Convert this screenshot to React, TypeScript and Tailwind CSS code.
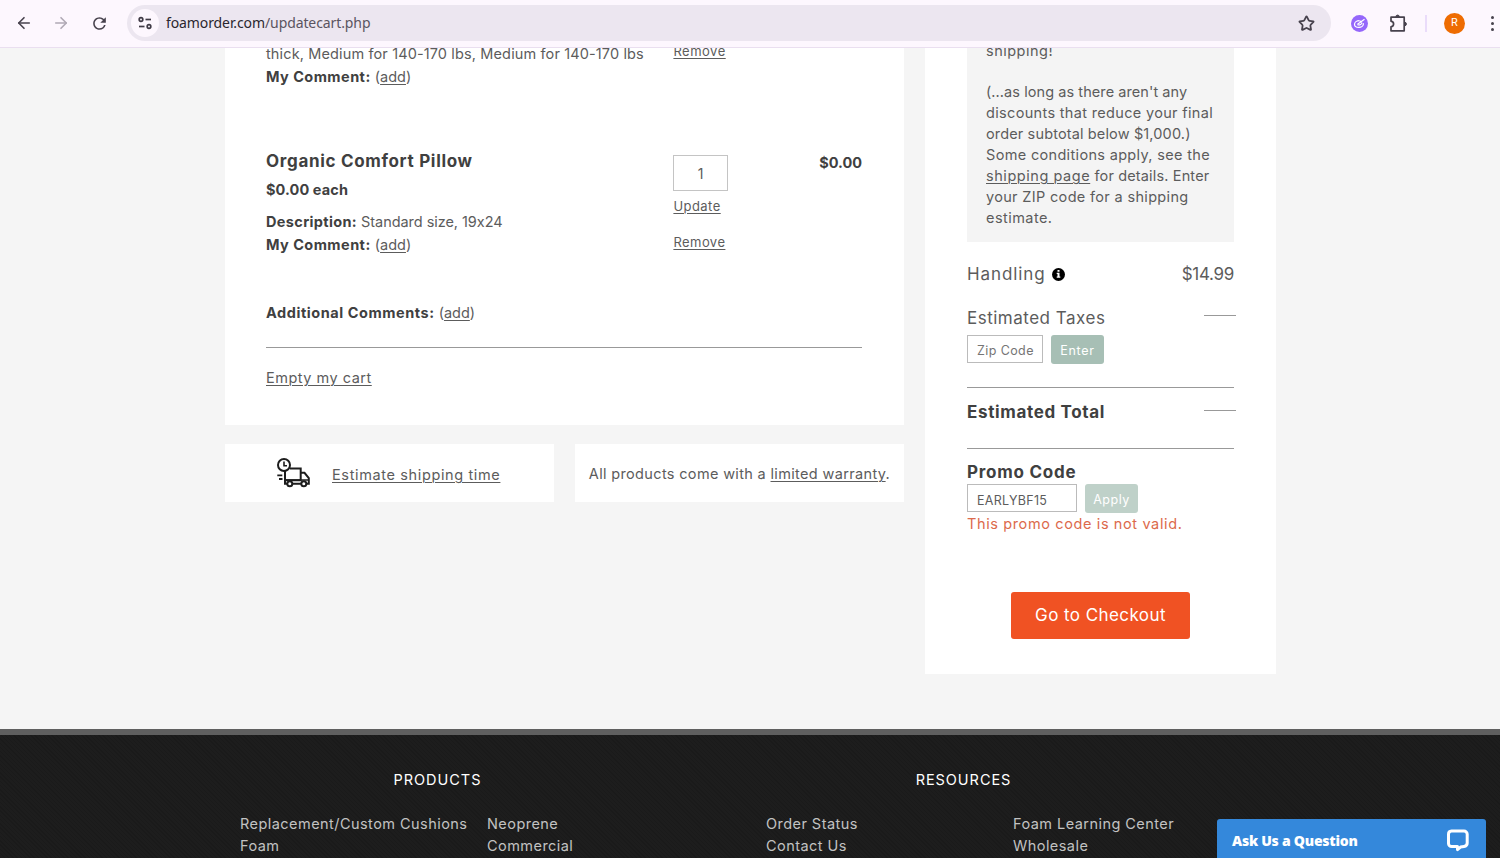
import type { ReactNode } from "react";
import { ArrowLeft, ArrowRight, Star } from "lucide-react";
import { MdRefresh } from "react-icons/md";

const FOOTER_GROUPS = [
  {
    title: "PRODUCTS",
    className: "ml-[240px]",
    links: ["Replacement/Custom Cushions", "Neoprene", "Foam", "Commercial"],
  },
  {
    title: "RESOURCES",
    className: "ml-[131px]",
    links: ["Order Status", "Foam Learning Center", "Contact Us", "Wholesale"],
  },
];

function A({ children, className = "" }: { children: ReactNode; className?: string }) {
  return (
    <a href="#" className={`underline decoration-1 underline-offset-2 ${className}`}>
      {children}
    </a>
  );
}

function Label({ children, className = "tracking-[0.45px]" }: { children: ReactNode; className?: string }) {
  return <b className={`font-bold text-[#404040] ${className}`}>{children}</b>;
}

function SiteSettingsIcon() {
  return (
    <svg width="16" height="16" viewBox="0 0 16 16" fill="none" stroke="#3f3a45" strokeWidth="1.7">
      <circle cx="4" cy="4.5" r="1.8" />
      <path d="M8.5 4.5H14" />
      <circle cx="12" cy="11.5" r="1.8" />
      <path d="M2 11.5H7.5" />
    </svg>
  );
}

function PuzzleIcon() {
  return (
    <svg width="20" height="20" viewBox="0 0 20 20" fill="none" stroke="#47424d" strokeWidth="1.7" strokeLinejoin="round">
      <path d="M3 4.2h13.2v13.6H3V13.8c1.7-.3 2.6-1.4 2.6-2.8S4.7 8.5 3 8.2z" />
      <path d="M7.9 3.8a1.7 1.7 0 0 1 3.4 0z" fill="#47424d" strokeWidth="1" />
      <path d="M16.7 9.3a1.7 1.7 0 0 1 0 3.4z" fill="#47424d" strokeWidth="1" />
    </svg>
  );
}

function TruckIcon() {
  return (
    <svg width="36" height="32" viewBox="0 0 36 32" fill="none" stroke="#1d1d1d" strokeWidth="2">
      <circle cx="8" cy="8" r="6" />
      <path d="M8 4.5v4.3h3" strokeWidth="1.6" />
      <path d="M14 11.5h10.7v11.7H9V14" />
      <path d="M24.7 15.8h3.8l4.3 5.2v5.700h-1.800M9 22v4.700h2M16.500 26.700h8.500" />
      <path d="M9 23h24" strokeWidth="1.5" />
      <circle cx="13.8" cy="26.7" r="2.5" fill="#fff" />
      <circle cx="27.8" cy="26.7" r="2.5" fill="#fff" />
      <path d="M1.300 18.300h5M3 22h3.500" strokeWidth="1.8" />
    </svg>
  );
}

function ChatIcon() {
  return (
    <svg width="24" height="25" viewBox="0 0 24 25" fill="none" stroke="#fff" strokeWidth="3" strokeLinejoin="round">
      <path d="M5.5 3h12.500a3.200 3.200 0 0 1 3.200 3.200v8.800c0 2-1.400 3.200-3.200 3.500l-3.500.6-3 2.500v-3H5.700a3.200 3.200 0 0 1-3.200-3.200V6.200A3.200 3.200 0 0 1 5.500 3z" />
    </svg>
  );
}

function BrowserBar() {
  return (
    <header className="flex h-12 shrink-0 items-center border-b border-[#eadff0] bg-[#fdf7fe] pb-px">
      <ArrowLeft className="ml-[15px] h-[18px] w-[18px] text-[#47424d]" strokeWidth={2.2} />
      <ArrowRight className="ml-[19px] h-[18px] w-[18px] text-[#b0a9b5]" strokeWidth={2.2} />
      <MdRefresh className="ml-5 h-[19px] w-[19px] text-[#47424d]" />
      <div className="ml-[18px] flex h-9 w-[1204px] items-center rounded-full bg-[#ece6f0]">
        <span className="ml-1 flex h-7 w-7 items-center justify-center rounded-full bg-[#fdf7fe]">
          <SiteSettingsIcon />
        </span>
        <span className="ml-[7px] font-['Noto_Sans',sans-serif] text-[14px] leading-5 tracking-[-0.1px] text-[#5a5460]">
          <span className="text-[#2a262e]">foamorder.com</span>/updatecart.php
        </span>
        <Star className="mr-4 ml-auto h-[17px] w-[17px] text-[#47424d]" strokeWidth={2.5} strokeLinejoin="miter" />
      </div>
      <span className="ml-5 flex h-[17px] w-[17px] items-center justify-center rounded-full bg-[#9567fb]">
        <svg width="13" height="11" viewBox="0 0 13 11" fill="none" stroke="#fff" strokeWidth="1.2">
          <path d="M10.5 5.2c0 2.4-2.1 4.2-4.6 4.2C3.4 9.4 1.5 8 1.5 6.2c0-2 2.3-3.6 5-3.6" />
          <path d="M4.5 6.3l7-5M4.5 6.3c1 1.4 3.5.6 4.8-1.5M6.7 2.7l2 2.2" />
        </svg>
      </span>
      <span className="ml-5">
        <PuzzleIcon />
      </span>
      <span className="ml-[17px] h-[17px] w-0.5 bg-[#eadcfa]" />
      <span className="ml-[17px] flex h-[21px] w-[21px] items-center justify-center rounded-full bg-[#ee6c02] font-[Roboto,sans-serif] text-[11px] text-white">
        R
      </span>
      <span className="ml-[26px] flex flex-col gap-[3px]">
        <i className="h-[3px] w-[3px] rounded-full bg-[#47424d]" />
        <i className="h-[3px] w-[3px] rounded-full bg-[#47424d]" />
        <i className="h-[3px] w-[3px] rounded-full bg-[#47424d]" />
      </span>
    </header>
  );
}

function CartCard() {
  return (
    <section className="h-[377px] overflow-hidden bg-white pr-[42px] pl-[41px]">
      <div className="-mt-1.5 flex h-[107px]">
        <div className="w-[407.4px] leading-[23px]">
          <p className="tracking-[0.13px] whitespace-nowrap">thick, Medium for 140-170 lbs, Medium for 140-170 lbs</p>
          <p>
            <Label>My Comment:</Label> (<A>add</A>)
          </p>
        </div>
        <A className="text-[13px] leading-[19px] tracking-[0.5px]">Remove</A>
      </div>
      <div className="flex h-[152px]">
        <div className="w-[407.4px]">
          <h2 className="text-[17px] leading-6 font-bold tracking-[0.68px] text-[#404040]">Organic Comfort Pillow</h2>
          <p className="mt-[5px] leading-6">
            <Label className="tracking-[0.1px]">$0.00 each</Label>
          </p>
          <p className="mt-2 leading-[23px]">
            <Label className="tracking-[0.35px]">Description:</Label>
            <span className="tracking-[-0.05px]"> Standard size, 19x24</span>
          </p>
          <p className="leading-[23px]">
            <Label>My Comment:</Label> (<A>add</A>)
          </p>
        </div>
        <div className="flex flex-col items-start text-[13px] leading-5 tracking-[0.45px]">
          <input
            defaultValue="1"
            className="mt-1.5 h-9 w-[55px] border border-[#c4c4c4] bg-white text-center text-[14px]"
          />
          <A className="mt-[5px]">Update</A>
          <A className="mt-4">Remove</A>
        </div>
        <p className="mt-0.5 ml-auto leading-6 font-bold text-[#404040]">$0.00</p>
      </div>
      <p className="leading-6">
        <Label className="tracking-[0.55px]">Additional Comments:</Label> (<A>add</A>)
      </p>
      <hr className="mt-[22px] border-[#999]" />
      <p className="mt-[18px] leading-[23px] tracking-[0.5px]">
        <A>Empty my cart</A>
      </p>
    </section>
  );
}

function SummaryCard() {
  return (
    <aside className="h-[626px] w-[351px] overflow-hidden bg-white px-[42px] text-[17px]">
      <div className="h-[194px] w-[267px] overflow-hidden bg-[#f4f4f4] pl-[19px] text-[14.5px] leading-[21px] tracking-[0.33px] whitespace-nowrap">
        <p className="-mt-2 tracking-[0.5px]">shipping!</p>
        <p className="mt-5">
          <span className="tracking-[0.07px]">(...as long as there aren't any</span>
          <br />
          discounts that reduce your final
          <br />
          <span className="tracking-[0.14px]">order subtotal below $1,000.)</span>
          <br />
          Some conditions apply, see the
          <br />
          <A className="tracking-[0.55px]">shipping page</A>
          <span className="tracking-[0.15px]"> for details. Enter</span>
          <br />
          your ZIP code for a shipping
          <br />
          <span className="tracking-[0.45px]">estimate.</span>
        </p>
      </div>
      <div className="mt-5 flex h-6 items-center">
        <span className="pt-0.5 tracking-[0.9px]">Handling</span>
        <span className="ml-1.5 flex h-[13px] w-[13px] items-center justify-center rounded-full bg-black">
          <svg width="5" height="8" viewBox="0 0 5 8" fill="#fff">
            <path d="M1.5 0h2v1.7h-2zM.7 2.8h2.8v3.7h.8v1.2H.7V6.5h.8V4H.7z" />
          </svg>
        </span>
        <span className="ml-auto pt-0.5 tracking-[-0.3px]">$14.99</span>
      </div>
      <div className="mt-[19px] flex h-6 items-center">
        <span className="pt-[3px] tracking-[0.5px]">Estimated Taxes</span>
        <span className="-mr-0.5 mb-1 ml-auto h-px w-8 bg-[#999]" />
      </div>
      <div className="mt-1.5 flex items-start text-[12.5px]">
        <input
          placeholder="Zip Code"
          className="h-7 w-[76px] border border-[#bbb] bg-white pt-[3px] pl-[9px] tracking-[0.4px] placeholder:text-[#757575]"
        />
        <button className="ml-2 h-[29px] w-[53px] rounded-[3px] bg-[#a7bfb5] pt-[3px] tracking-[0.7px] text-white">
          Enter
        </button>
      </div>
      <hr className="mt-[23px] border-[#999]" />
      <div className="mt-3 flex h-6 items-center">
        <span className="pt-0.5">
          <Label className="tracking-[0.65px]">Estimated Total</Label>
        </span>
        <span className="-mr-0.5 mb-1 ml-auto h-px w-8 bg-[#999]" />
      </div>
      <hr className="mt-6 border-[#999]" />
      <h3 className="mt-[11px] h-6 leading-[25px] font-bold tracking-[0.75px] text-[#404040]">Promo Code</h3>
      <div className="flex items-start text-[12.5px]">
        <input
          defaultValue="EARLYBF15"
          className="h-7 w-[110px] border border-[#bbb] bg-white pt-1 pl-[9px] tracking-[0.3px]"
        />
        <button className="ml-2 h-[29px] w-[53px] rounded-[3px] bg-[#bfd1c9] pt-[3px] tracking-[0.5px] text-white">
          Apply
        </button>
      </div>
      <p className="h-[22px] text-[14.5px] leading-[22px] tracking-[0.62px] text-[#dc6a4c]">
        This promo code is not valid.
      </p>
      <button className="mt-[57px] ml-11 h-[47px] w-[179px] rounded-[3px] bg-[#f05223] text-[17px] tracking-[0.43px] text-white">
        Go to Checkout
      </button>
    </aside>
  );
}

function Footer() {
  return (
    <footer className="flex flex-1 border-t-[6px] border-[#5f5f5f] bg-[#1c1c1c] bg-[repeating-linear-gradient(45deg,#1a1a1a_0_1px,#1d1d1d_1px_3px)] pt-[34px]">
      {FOOTER_GROUPS.map((group) => (
        <div key={group.title} className={`w-[395px] shrink-0 ${group.className}`}>
          <h4 className="text-center leading-[22px] tracking-[0.95px] text-white">{group.title}</h4>
          <div className="mt-[22px] grid grid-cols-[247px_1fr] leading-[22px] tracking-[0.45px] text-[#c2c2c2]">
            {group.links.map((link) => (
              <a key={link} href="#" className="whitespace-nowrap">
                {link}
              </a>
            ))}
          </div>
        </div>
      ))}
    </footer>
  );
}

export default function App() {
  return (
    <div className="relative flex h-[858px] w-[1500px] flex-col overflow-hidden bg-[#f5f5f5] font-[Inter,sans-serif] text-[14.5px] text-[#5c5c5c] [font-feature-settings:'calt'_0]">
      <BrowserBar />
      <main className="flex h-[681px] shrink-0 pl-[225px]">
        <div className="mr-[21px] w-[679px]">
          <CartCard />
          <div className="mt-[19px] flex gap-[21px]">
            <div className="flex h-[58px] w-[329px] items-center bg-white pl-[51px]">
              <TruckIcon />
              <A className="mt-1 ml-5 tracking-[0.63px]">Estimate shipping time</A>
            </div>
            <div className="flex h-[58px] w-[329px] items-center justify-center bg-white pt-0.5 tracking-[0.34px] whitespace-nowrap">
              <p>
                All products come with a <A>limited warranty</A>.
              </p>
            </div>
          </div>
        </div>
        <SummaryCard />
      </main>
      <Footer />
      <button className="absolute top-[819px] left-[1217px] flex h-[39px] w-[269px] items-center justify-between rounded-t-[3px] bg-[#3488db] pt-1 pr-4 pl-[15px] font-['Noto_Sans',sans-serif] text-[14px] font-black tracking-[-0.25px] text-white">
        Ask Us a Question
        <ChatIcon />
      </button>
    </div>
  );
}
